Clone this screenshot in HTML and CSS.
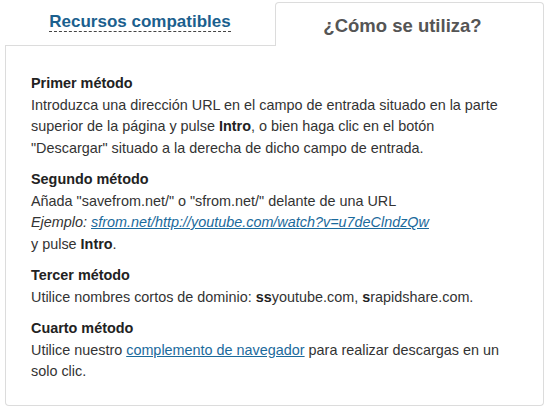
FILE: index.html
```html
<!DOCTYPE html>
<html lang="es">
<head>
<meta charset="utf-8">
<title>¿Cómo se utiliza?</title>
<link rel="stylesheet" href="styles.css">
</head>
<body>
<div class="widget">
  <div class="tabs">
    <div class="tab tab-inactive"><span class="tab-link">Recursos compatibles</span></div>
    <div class="tab tab-active"><span class="tab-title">¿Cómo se utiliza?</span></div>
  </div>
  <div class="panel">
    <div class="method">
      <div class="method-title">Primer método</div>
      <p class="method-text">Introduzca una dirección URL en el campo de entrada situado en la parte superior de la página y pulse <b>Intro</b>, o bien haga clic en el botón<br>"Descargar" situado a la derecha de dicho campo de entrada.</p>
    </div>
    <div class="method">
      <div class="method-title">Segundo método</div>
      <p class="method-text">Añada "savefrom.net/" o "sfrom.net/" delante de una URL<br><i>Ejemplo: <a class="link" href="#">sfrom.net/http://youtube.com/watch?v=u7deClndzQw</a></i><br>y pulse <b>Intro</b>.</p>
    </div>
    <div class="method">
      <div class="method-title">Tercer método</div>
      <p class="method-text">Utilice nombres cortos de dominio: <b>ss</b>youtube.com, <b>s</b>rapidshare.com.</p>
    </div>
    <div class="method">
      <div class="method-title">Cuarto método</div>
      <p class="method-text">Utilice nuestro <a class="link" href="#">complemento de navegador</a> para realizar descargas en un solo clic.</p>
    </div>
  </div>
</div>
</body>
</html>
```

FILE: styles.css
```css
html, body {
  margin: 0;
  padding: 0;
  background: #ffffff;
}

body {
  font-family: Arial, "Liberation Sans", sans-serif;
  color: #333333;
}

.widget {
  width: 539px;
  margin-left: 5px;
  padding-top: 2px;
}

.tabs {
  display: flex;
  height: 44px;
}

.tab {
  display: flex;
  align-items: center;
  justify-content: center;
  box-sizing: border-box;
  height: 44px;
  font-weight: bold;
}

.tab-inactive {
  width: 270px;
  border-bottom: 1px solid #dcdcdc;
  padding-bottom: 3px;
  font-size: 17px;
}

.tab-active {
  width: 269px;
  border: 1px solid #dcdcdc;
  border-bottom: none;
  border-radius: 4px 4px 0 0;
  padding-right: 14px;
  padding-top: 2px;
  font-size: 18.5px;
}

.tab-link {
  color: #1b5f8e;
  border-bottom: 1px dashed #444;
  line-height: 19px;
}

.tab-title {
  color: #555555;
}

.panel {
  box-sizing: border-box;
  border: 1px solid #dcdcdc;
  border-top: none;
  border-radius: 0 0 4px 4px;
  padding: 27px 22px 22px 25px;
  font-size: 14.4px;
  line-height: 21.5px;
}

.method + .method {
  margin-top: 10px;
}

.method-title {
  font-weight: bold;
  color: #222222;
}

.method-text {
  margin: 0;
}

.method-text b {
  color: #222222;
}

.link {
  color: #1b6a9c;
  text-decoration: underline;
}
```
